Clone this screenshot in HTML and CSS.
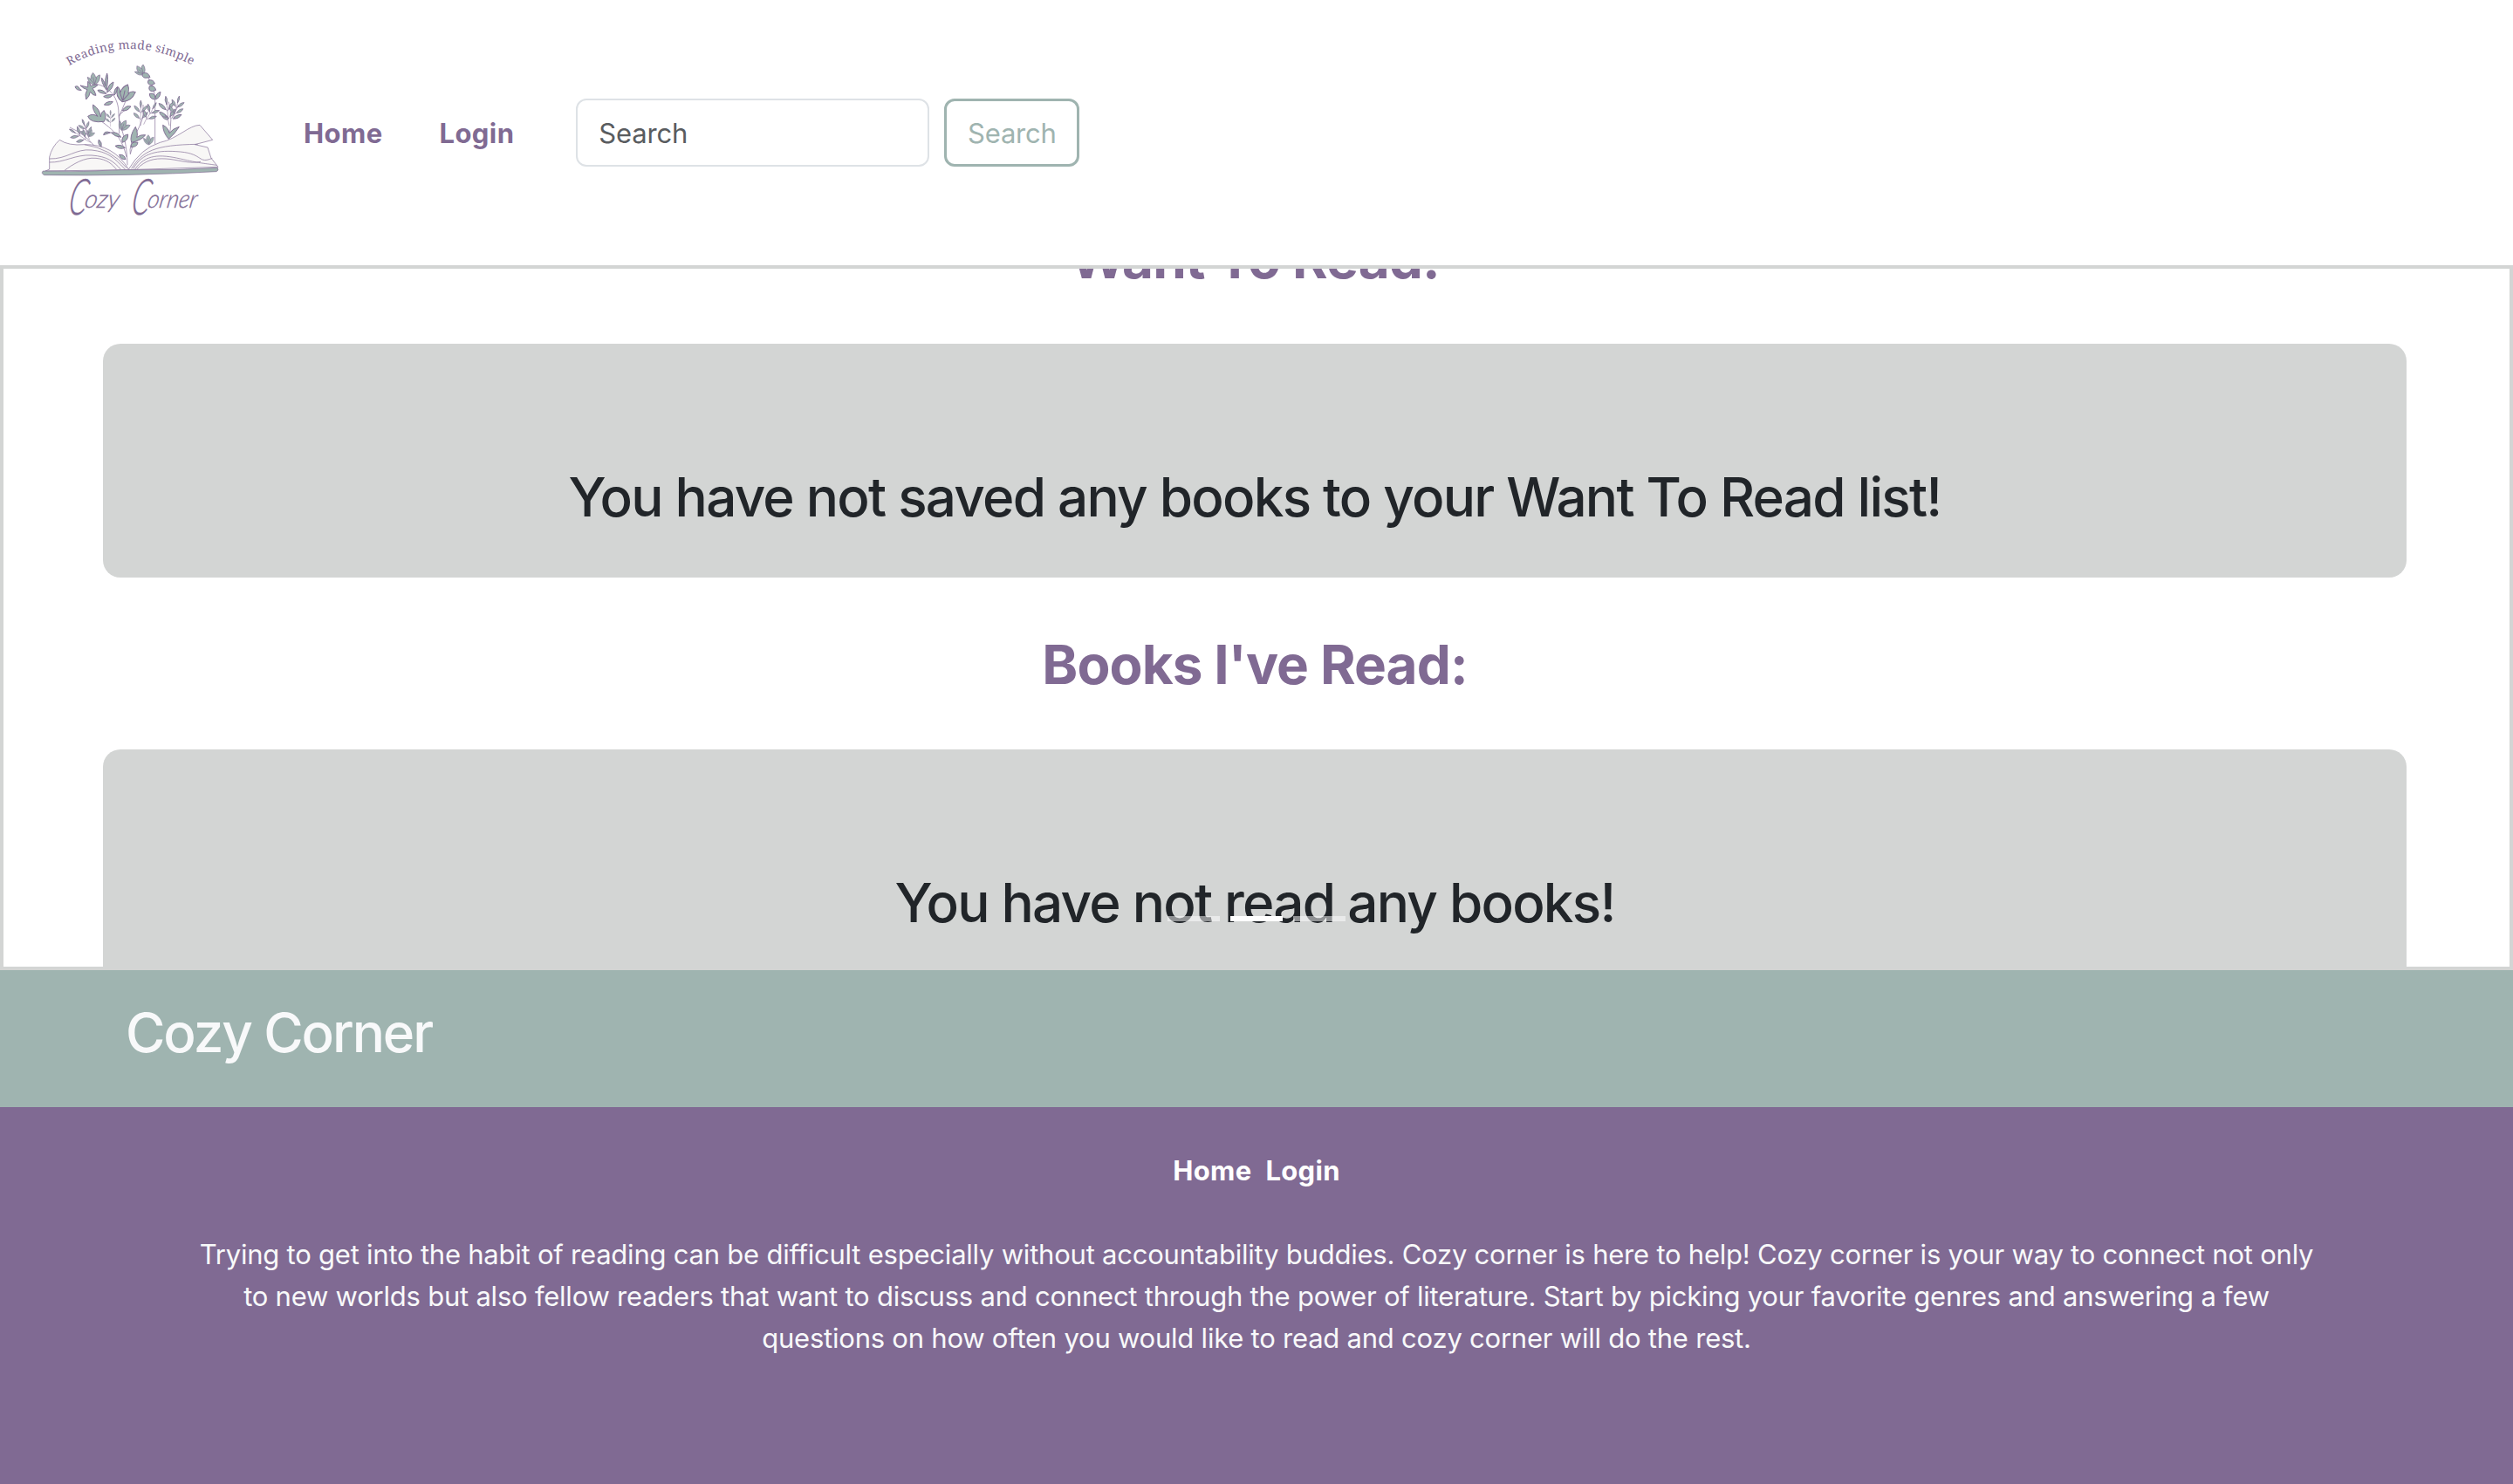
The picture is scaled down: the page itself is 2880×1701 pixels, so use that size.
FILE: index.html
```html
<!DOCTYPE html>
<html lang="en">
<head>
<meta charset="utf-8">
<title>Cozy Corner</title>
<link rel="stylesheet" href="styles.css">
</head>
<body>
<header class="navbar">
  <svg class="logo" viewBox="0 0 720 792" role="img" aria-label="Cozy Corner">
    <defs>
      <path id="arc" d="M148 166Q355 46 590 174"/>
      <g id="sprig">
        <path class="stem" d="M0 0C-6-30 4-60 0-100M0-30L-18-48M0-30L20-50M0-62L-18-82M0-62L18-82"/>
        <path class="leaf" d="M0-88Q-9-110 0-124Q9-110 0-88ZM-8-36Q-34-42-34-62Q-12-58-8-36ZM8-38Q12-60 34-66Q32-44 8-38ZM-6-68Q-30-76-32-98Q-10-92-6-68ZM6-68Q10-92 32-98Q28-76 6-68Z"/>
      </g>
      <path id="bloom" class="leaf" d="M0 0Q-30-6-34-42Q-24-40-18-30Q-18-50-4-62Q6-52 8-36Q18-48 30-48Q30-14 0 0ZM0-4L-6-40M0-4L12-36M0-4L-22-30"/>
    </defs>
    <text class="tagline"><textPath href="#arc" textLength="442">Reading made simple</textPath></text>
    <path class="stem" d="M348 508C346 400 318 380 318 330S290 236 235 228M320 400V335L350 310M345 480C330 420 310 390 240 345M358 470C350 430 390 390 402 340V300M443 436V280Q440 220 400 185M490 418Q505 350 490 290M500 348L525 300M235 442Q200 400 150 378M215 412L195 352M320 340L345 280M358 470L372 420"/>
    <use href="#bloom" transform="translate(330 290) rotate(22)"/>
    <use href="#bloom" transform="translate(236 232) rotate(-5) scale(.68)"/>
    <use href="#bloom" transform="translate(404 196) rotate(-35) scale(.6)"/>
    <use href="#bloom" transform="translate(422 438) scale(.55)"/>
    <use href="#bloom" transform="translate(328 388) rotate(28) scale(.6)"/>
    <use href="#bloom" transform="translate(216 410) rotate(25) scale(.42)"/>
    <path class="leaf" d="M268 358Q220 364 212 340Q228 328 246 340Q226 318 230 300Q254 316 256 342Q258 324 268 320Q278 340 268 358Z"/>
    <path class="leaf" d="M212 240L186 234Q198 246 210 248Q200 264 206 282Q218 272 220 256Q230 270 240 268Q236 252 228 244Q244 238 246 232Q228 230 222 236Q220 222 212 220ZM190 250Q172 252 168 238Q178 232 184 246Z"/>
    <path class="leaf" d="M276 250Q256 220 260 208Q272 224 272 236Q270 210 278 192Q284 208 276 250ZM278 258Q280 230 300 222Q300 244 278 258ZM276 262Q250 262 246 250Q262 246 276 262ZM298 266Q276 264 266 272Q284 284 298 266ZM298 290Q288 306 268 300Q280 286 298 290ZM302 268Q302 246 312 240Q314 258 302 268ZM330 320Q344 300 360 306Q348 324 330 320Z"/>
    <path class="leaf" d="M410 208Q396 206 400 192Q420 186 426 206ZM430 232Q414 230 420 216Q438 212 442 228ZM434 254Q418 252 424 236Q442 232 446 250ZM442 282Q424 280 424 262Q444 258 444 278Q446 260 462 256Q460 280 442 282Z"/>
    <path class="leaf" d="M326 412Q304 410 292 396Q316 392 326 412ZM330 430Q326 406 350 402Q352 424 330 430ZM340 448Q320 456 306 442Q324 434 340 448ZM342 488Q324 490 320 472Q338 470 342 488ZM360 446Q360 424 384 430Q382 446 360 446ZM362 430Q354 408 376 376Q386 402 380 412Q394 402 410 404Q398 422 362 430ZM290 396Q268 388 266 404ZM258 446Q244 434 250 420Q262 430 258 446Z"/>
    <path class="leaf" d="M490 418Q470 396 470 370Q490 380 492 398Q504 382 526 376Q512 400 490 418ZM484 352Q464 346 468 330Q484 334 490 348ZM506 348Q514 334 534 334Q524 350 506 348Z"/>
    <use href="#sprig" transform="translate(492 372) rotate(-7) scale(.82)"/>
    <use href="#sprig" transform="translate(506 352) rotate(14) scale(.68)"/>
    <use href="#sprig" transform="translate(394 372) scale(.7)"/>
    <use href="#sprig" transform="translate(404 368) rotate(30) scale(.7)"/>
    <use href="#sprig" transform="translate(290 376) scale(.46)"/>
    <use href="#sprig" transform="translate(218 420) rotate(-20) scale(.6)"/>
    <use href="#sprig" transform="translate(222 430) rotate(-58) scale(.7)"/>
    <path class="page" d="M115 421Q145 442 200 437Q300 435 352 522Q395 450 460 430C520 418 560 370 597 370L641 421L580 437L624 447L636 484L660 514L350 524L66 528L80 522V480Q88 445 115 421Z"/>
    <path class="line" d="M80 486C140 488 170 450 225 456S300 480 340 522M80 498C130 500 170 470 225 474S300 495 325 522M132 526C160 505 200 480 240 484S295 505 310 522M362 520C400 460 440 438 590 436M368 520C400 465 450 455 530 462S590 505 640 484M374 522C410 470 460 470 530 486S600 500 655 508M380 522C410 490 440 484 480 486S560 505 600 496M200 437Q290 450 346 518"/>
    <path class="cover" d="M58 528Q200 532 330 524H380Q520 526 658 517Q664 526 654 530Q350 546 62 542Q50 536 58 528Z"/>
    <g class="script">
      <text transform="translate(140 677) skewX(-10)"><tspan class="cap" textLength="62" lengthAdjust="spacingAndGlyphs">C</tspan><tspan class="low" x="54" y="-24" textLength="118" lengthAdjust="spacingAndGlyphs">ozy</tspan></text>
      <text transform="translate(356 677) skewX(-10)"><tspan class="cap" textLength="62" lengthAdjust="spacingAndGlyphs">C</tspan><tspan class="low" x="54" y="-24" textLength="170" lengthAdjust="spacingAndGlyphs">orner</tspan></text>
    </g>
  </svg>
  <nav class="links">
    <a>Home</a>
    <a>Login</a>
  </nav>
  <form class="search">
    <input class="field" type="text" placeholder="Search">
    <button class="submit" type="button">Search</button>
  </form>
</header>
<main class="shelf">
  <h1 class="title want">Want To Read:</h1>
  <section class="card"><h2 class="note">You have not saved any books to your Want To Read list!</h2></section>
  <h1 class="title">Books I've Read:</h1>
  <section class="card"><h2 class="note">You have not read any books!</h2></section>
  <div class="indicators"><i></i><i class="active"></i><i></i></div>
</main>
<footer>
  <div class="brand">Cozy Corner</div>
  <div class="about">
    <nav class="footer-links"><a>Home</a><a>Login</a></nav>
    <p class="blurb">Trying to get into the habit of reading can be difficult especially without accountability buddies. Cozy corner is here to help! Cozy corner is your way to connect not only<br>to new worlds but also fellow readers that want to discuss and connect through the power of literature. Start by picking your favorite genres and answering a few<br>questions on how often you would like to read and cozy corner will do the rest.</p>
  </div>
</footer>
</body>
</html>
```
FILE: styles.css
```css
* { box-sizing: border-box; }
body {
  margin: 0;
  height: 1701px;
  display: flex;
  flex-direction: column;
  overflow: hidden;
  background: #fff;
  color: #212529;
  font-family: Inter, "Liberation Sans", sans-serif;
  font-size: 31px;
  line-height: 48px;
}
h1, h2, p { margin: 0; }

.navbar { height: 304px; display: flex; align-items: center; padding-left: 30px; }
.logo { width: 240px; height: 264px; }
.stem, .line { fill: none; stroke: #8c789d; stroke-width: 2.2; }
.leaf { fill: #9fb4b0; stroke: #806a93; stroke-width: 2.8; }
.page { fill: #f8f7f6; stroke: #8c789d; stroke-width: 2.2; }
.cover { fill: #9fb4b0; stroke: #806a93; stroke-width: 2; }
.tagline { font-family: "Noto Serif", "Liberation Serif", serif; font-size: 41px; fill: #806a93; }
.script { font-family: Lato, "Liberation Sans", sans-serif; font-weight: 300; font-style: italic; fill: #806a93; stroke: #806a93; stroke-width: 1; }
.cap { font-size: 172px; }
.low { font-size: 86px; }
.links { display: flex; gap: 65px; padding: 2px 0 0 78px; color: #806a93; font-weight: 700; letter-spacing: .4px; }
.search { display: flex; gap: 17px; margin-left: 71px; }
.field, .submit { height: 78px; border-radius: 12px; background: #fff; font: inherit; letter-spacing: -.2px; }
.field { width: 405px; border: 2px solid #dee2e6; padding: 0 24px; }
.field::placeholder { color: #595c5f; opacity: 1; }
.submit { width: 155px; border: 3px solid #9fb4b0; padding: 2px 0 0; color: #9fb4b0; }

.shelf {
  position: relative;
  height: 808px;
  border: 4px solid #d3d5d4;
  padding: 0 118px 0 114px;
  overflow: hidden;
  text-align: center;
}
.title, .note { font-size: 62px; line-height: 77px; white-space: nowrap; }
.title { margin: 61px 0 59px; color: #806a93; font-weight: 700; letter-spacing: -.9px; }
.want { margin-top: -50px; }
.card { height: 268px; padding-top: 137px; border-radius: 20px; background: #d3d5d4; }
.note { font-weight: 500; letter-spacing: -1.75px; }
.indicators { position: absolute; left: 0; right: 0; top: 742px; display: flex; justify-content: center; gap: 12px; }
.indicators i { width: 60px; height: 6px; background: #fff; opacity: .5; }
.indicators .active { opacity: 1; }

.brand { height: 157px; padding: 33px 0 0 144px; background: #9fb4b0; color: #f8f9fa; font-size: 62px; font-weight: 500; line-height: 77px; letter-spacing: -2.1px; }
.about { height: 432px; padding-top: 49px; background: #806a93; color: #fff; text-align: center; }
.footer-links { display: flex; justify-content: center; gap: 16px; font-weight: 700; letter-spacing: .3px; }
.blurb { margin-top: 48px; white-space: nowrap; color: #f8f9fa; letter-spacing: -.225px; }
```
